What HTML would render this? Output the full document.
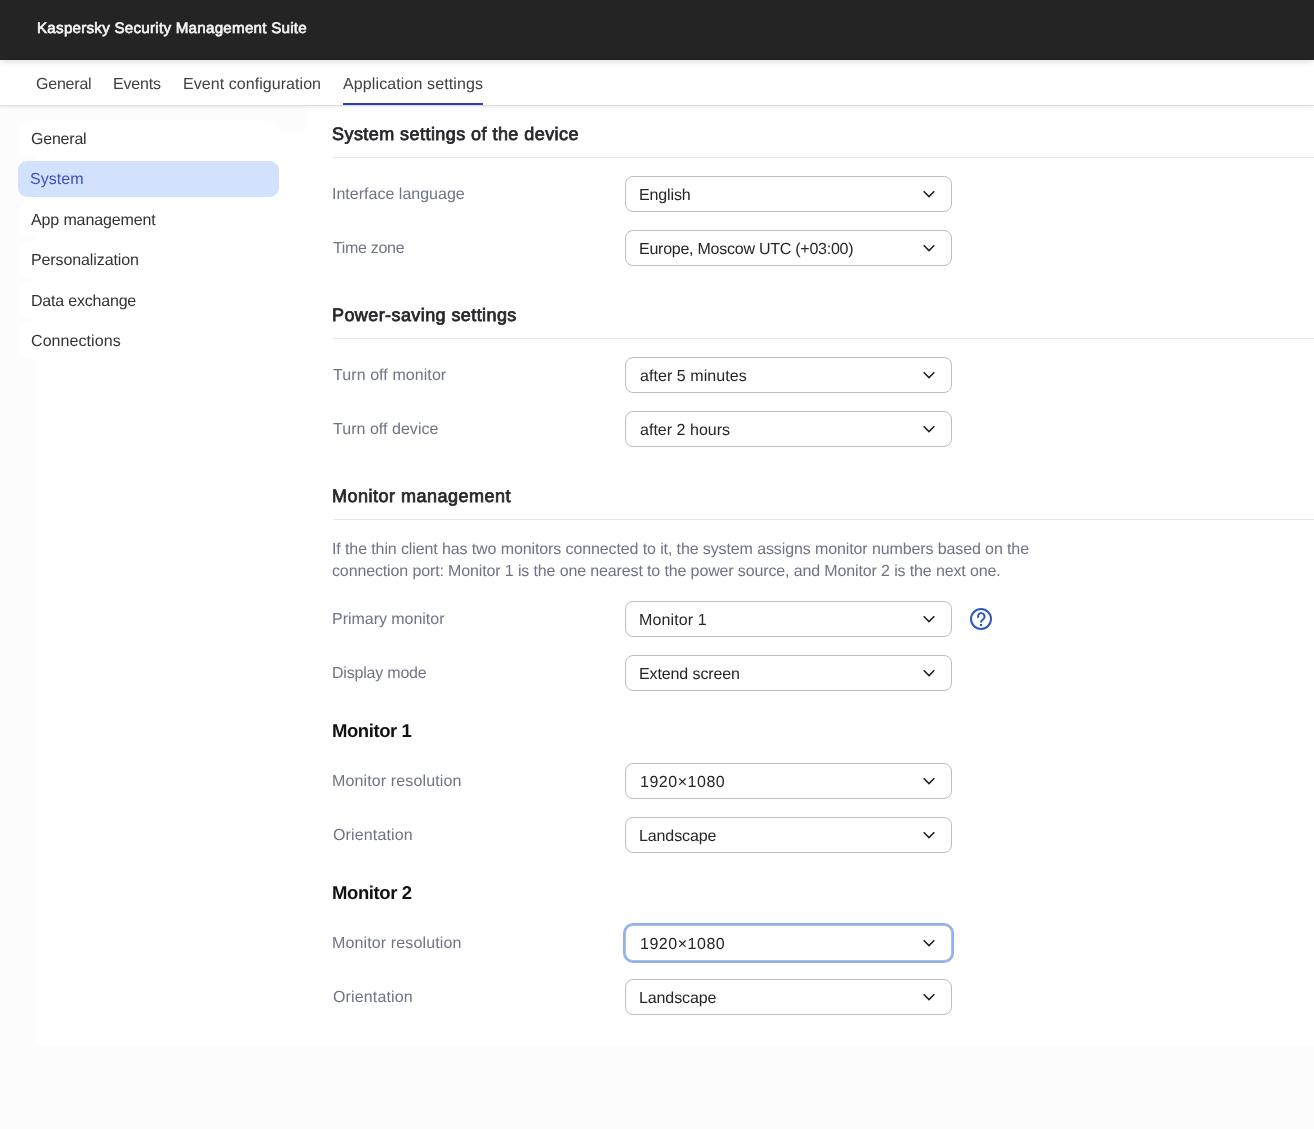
<!DOCTYPE html>
<html><head><meta charset="utf-8">
<style>
*{margin:0;padding:0;box-sizing:border-box}
html,body{width:1314px;height:1129px;overflow:hidden;background:#fcfcfc;font-family:"Liberation Sans",sans-serif}
.x{position:absolute;white-space:nowrap;line-height:20px;will-change:transform;text-rendering:geometricPrecision;z-index:5}

#hdr{position:absolute;left:0;top:0;width:1314px;height:60px;background:#242424;z-index:3;box-shadow:0 1px 7px rgba(0,0,0,.16)}
#tabs{position:absolute;left:0;top:60px;width:1314px;height:46px;background:#fff;border-bottom:1px solid #dcdcdc;box-shadow:0 1px 3px rgba(0,0,0,.08);z-index:2}
#ul{position:absolute;left:343px;top:103px;width:140px;height:2px;background:#2b3dbe;z-index:4}
#panel{position:absolute;left:36px;top:132px;width:1278px;height:914px;background:#fff}
#panel2{position:absolute;left:306px;top:106px;width:1008px;height:30px;background:#fff}
.side{position:absolute;left:18px;width:261px;height:36px;border-radius:9px;background:#fff}
.side.act{background:#d3e2fc}
.hr{position:absolute;left:333px;width:981px;height:1px;background:#e6e6ee}
.sel{position:absolute;left:625px;width:327px;height:36px;border:1px solid #b8bec9;border-radius:8px;background:#fff}
.sel svg{position:absolute;left:297px;top:13px}
.sel.foc{box-shadow:0 0 0 2px #8db1f8}
</style></head><body>
<div id="hdr"></div><div id="tabs"></div><div id="ul"></div><div id="panel2"></div><div id="panel"></div>
<div class="side" style="top:121px"></div>
<div class="side act" style="top:161px"></div>
<div class="side" style="top:201px"></div>
<div class="side" style="top:242px"></div>
<div class="side" style="top:282px"></div>
<div class="side" style="top:322px"></div>
<div class="hr" style="top:157px"></div>
<div class="hr" style="top:338px"></div>
<div class="hr" style="top:519px"></div>
<div class="sel" style="top:176px"><svg width="12" height="8" viewBox="0 0 12 8"><path d="M0.7 1.3L6 6.6L11.3 1.3" fill="none" stroke="#202020" stroke-width="1.55"/></svg></div>
<div class="sel" style="top:230px"><svg width="12" height="8" viewBox="0 0 12 8"><path d="M0.7 1.3L6 6.6L11.3 1.3" fill="none" stroke="#202020" stroke-width="1.55"/></svg></div>
<div class="sel" style="top:357px"><svg width="12" height="8" viewBox="0 0 12 8"><path d="M0.7 1.3L6 6.6L11.3 1.3" fill="none" stroke="#202020" stroke-width="1.55"/></svg></div>
<div class="sel" style="top:411px"><svg width="12" height="8" viewBox="0 0 12 8"><path d="M0.7 1.3L6 6.6L11.3 1.3" fill="none" stroke="#202020" stroke-width="1.55"/></svg></div>
<div class="sel" style="top:601px"><svg width="12" height="8" viewBox="0 0 12 8"><path d="M0.7 1.3L6 6.6L11.3 1.3" fill="none" stroke="#202020" stroke-width="1.55"/></svg></div>
<div class="sel" style="top:655px"><svg width="12" height="8" viewBox="0 0 12 8"><path d="M0.7 1.3L6 6.6L11.3 1.3" fill="none" stroke="#202020" stroke-width="1.55"/></svg></div>
<div class="sel" style="top:763px"><svg width="12" height="8" viewBox="0 0 12 8"><path d="M0.7 1.3L6 6.6L11.3 1.3" fill="none" stroke="#202020" stroke-width="1.55"/></svg></div>
<div class="sel" style="top:817px"><svg width="12" height="8" viewBox="0 0 12 8"><path d="M0.7 1.3L6 6.6L11.3 1.3" fill="none" stroke="#202020" stroke-width="1.55"/></svg></div>
<div class="sel foc" style="top:925px"><svg width="12" height="8" viewBox="0 0 12 8"><path d="M0.7 1.3L6 6.6L11.3 1.3" fill="none" stroke="#202020" stroke-width="1.55"/></svg></div>
<div class="sel" style="top:979px"><svg width="12" height="8" viewBox="0 0 12 8"><path d="M0.7 1.3L6 6.6L11.3 1.3" fill="none" stroke="#202020" stroke-width="1.55"/></svg></div>
<svg style="position:absolute;left:970px;top:608px" width="22" height="22" viewBox="0 0 22 22"><circle cx="11" cy="11" r="10" fill="none" stroke="#2f58c2" stroke-width="2"/><path d="M8.3 9.8A3.3 3.3 0 1 1 14 10.3L11.2 13.4V14.6" fill="none" stroke="#2f58c2" stroke-width="2"/><rect x="10" y="16" width="2.1" height="2.1" fill="#2f58c2"/></svg>
<div class="x" id="t0" style="left:36.88px;top:19.00px;font-size:15.2px;font-weight:400;color:#f5f5f5;letter-spacing:0.237px;-webkit-text-stroke:0.65px #f5f5f5">Kaspersky Security Management Suite</div>
<div class="x" id="t1" style="left:35.61px;top:75.00px;font-size:16px;font-weight:400;color:#404040;letter-spacing:-0.212px">General</div>
<div class="x" id="t2" style="left:112.64px;top:75.00px;font-size:16px;font-weight:400;color:#404040;letter-spacing:-0.193px">Events</div>
<div class="x" id="t3" style="left:183.04px;top:74.90px;font-size:16px;font-weight:400;color:#404040;letter-spacing:0.058px">Event configuration</div>
<div class="x" id="t4" style="left:343.47px;top:74.90px;font-size:16px;font-weight:400;color:#404040;letter-spacing:0.113px">Application settings</div>
<div class="x" id="t5" style="left:31.01px;top:130.00px;font-size:16px;font-weight:400;color:#333333;letter-spacing:-0.212px">General</div>
<div class="x" id="t6" style="left:30.34px;top:170.21px;font-size:16px;font-weight:400;color:#3a4fc4;letter-spacing:0.057px">System</div>
<div class="x" id="t7" style="left:31.27px;top:211.21px;font-size:16px;font-weight:400;color:#333333;letter-spacing:-0.126px">App management</div>
<div class="x" id="t8" style="left:30.64px;top:250.81px;font-size:16px;font-weight:400;color:#333333;letter-spacing:-0.105px">Personalization</div>
<div class="x" id="t9" style="left:30.64px;top:291.60px;font-size:16px;font-weight:400;color:#333333;letter-spacing:-0.200px">Data exchange</div>
<div class="x" id="t10" style="left:31.01px;top:331.81px;font-size:16px;font-weight:400;color:#333333;letter-spacing:0.075px">Connections</div>
<div class="x" id="t11" style="left:332.26px;top:123.71px;font-size:18px;font-weight:400;color:#27272b;letter-spacing:0.441px;-webkit-text-stroke:0.75px #27272b">System settings of the device</div>
<div class="x" id="t12" style="left:332.39px;top:304.81px;font-size:18px;font-weight:400;color:#27272b;letter-spacing:0.412px;-webkit-text-stroke:0.75px #27272b">Power-saving settings</div>
<div class="x" id="t13" style="left:332.39px;top:485.81px;font-size:18px;font-weight:400;color:#27272b;letter-spacing:0.502px;-webkit-text-stroke:0.75px #27272b">Monitor management</div>
<div class="x" id="t14" style="left:332.11px;top:720.81px;font-size:18.5px;font-weight:700;color:#111114;letter-spacing:-0.427px">Monitor 1</div>
<div class="x" id="t15" style="left:332.11px;top:882.81px;font-size:18.5px;font-weight:700;color:#111114;letter-spacing:-0.413px">Monitor 2</div>
<div class="x" id="t16" style="left:331.52px;top:184.81px;font-size:16px;font-weight:400;color:#6f7486;letter-spacing:0.012px">Interface language</div>
<div class="x" id="t17" style="left:332.65px;top:238.81px;font-size:16px;font-weight:400;color:#6f7486;letter-spacing:-0.317px">Time zone</div>
<div class="x" id="t18" style="left:332.65px;top:365.81px;font-size:16px;font-weight:400;color:#6f7486;letter-spacing:0.076px">Turn off monitor</div>
<div class="x" id="t19" style="left:332.65px;top:419.81px;font-size:16px;font-weight:400;color:#6f7486;letter-spacing:0.033px">Turn off device</div>
<div class="x" id="t20" style="left:332.04px;top:609.81px;font-size:16px;font-weight:400;color:#6f7486;letter-spacing:-0.031px">Primary monitor</div>
<div class="x" id="t21" style="left:332.04px;top:663.81px;font-size:16px;font-weight:400;color:#6f7486;letter-spacing:-0.205px">Display mode</div>
<div class="x" id="t22" style="left:332.04px;top:771.81px;font-size:16px;font-weight:400;color:#6f7486;letter-spacing:0.132px">Monitor resolution</div>
<div class="x" id="t23" style="left:332.84px;top:825.81px;font-size:16px;font-weight:400;color:#6f7486;letter-spacing:0.137px">Orientation</div>
<div class="x" id="t24" style="left:332.04px;top:933.81px;font-size:16px;font-weight:400;color:#6f7486;letter-spacing:0.132px">Monitor resolution</div>
<div class="x" id="t25" style="left:332.84px;top:987.81px;font-size:16px;font-weight:400;color:#6f7486;letter-spacing:0.137px">Orientation</div>
<div class="x" id="t26" style="left:638.84px;top:186.21px;font-size:16px;font-weight:400;color:#262626;letter-spacing:-0.131px">English</div>
<div class="x" id="t27" style="left:638.84px;top:240.21px;font-size:16px;font-weight:400;color:#262626;letter-spacing:-0.246px">Europe, Moscow UTC (+03:00)</div>
<div class="x" id="t28" style="left:640.09px;top:367.21px;font-size:16px;font-weight:400;color:#262626;letter-spacing:0.058px">after 5 minutes</div>
<div class="x" id="t29" style="left:640.09px;top:421.21px;font-size:16px;font-weight:400;color:#262626;letter-spacing:0.021px">after 2 hours</div>
<div class="x" id="t30" style="left:638.84px;top:611.21px;font-size:16px;font-weight:400;color:#262626;letter-spacing:0.113px">Monitor 1</div>
<div class="x" id="t31" style="left:638.84px;top:665.21px;font-size:16px;font-weight:400;color:#262626;letter-spacing:-0.109px">Extend screen</div>
<div class="x" id="t32" style="left:639.65px;top:773.21px;font-size:16px;font-weight:400;color:#262626;letter-spacing:0.525px">1920×1080</div>
<div class="x" id="t33" style="left:638.84px;top:827.21px;font-size:16px;font-weight:400;color:#262626;letter-spacing:-0.116px">Landscape</div>
<div class="x" id="t34" style="left:639.65px;top:935.21px;font-size:16px;font-weight:400;color:#262626;letter-spacing:0.525px">1920×1080</div>
<div class="x" id="t35" style="left:638.84px;top:989.21px;font-size:16px;font-weight:400;color:#262626;letter-spacing:-0.116px">Landscape</div>
<div class="x" id="t36" style="left:331.52px;top:539.90px;font-size:16px;font-weight:400;color:#6f7384;letter-spacing:-0.110px">If the thin client has two monitors connected to it, the system assigns monitor numbers based on the</div>
<div class="x" id="t37" style="left:332.44px;top:561.71px;font-size:16px;font-weight:400;color:#6f7384;letter-spacing:-0.131px">connection port: Monitor 1 is the one nearest to the power source, and Monitor 2 is the next one.</div>
</body></html>
